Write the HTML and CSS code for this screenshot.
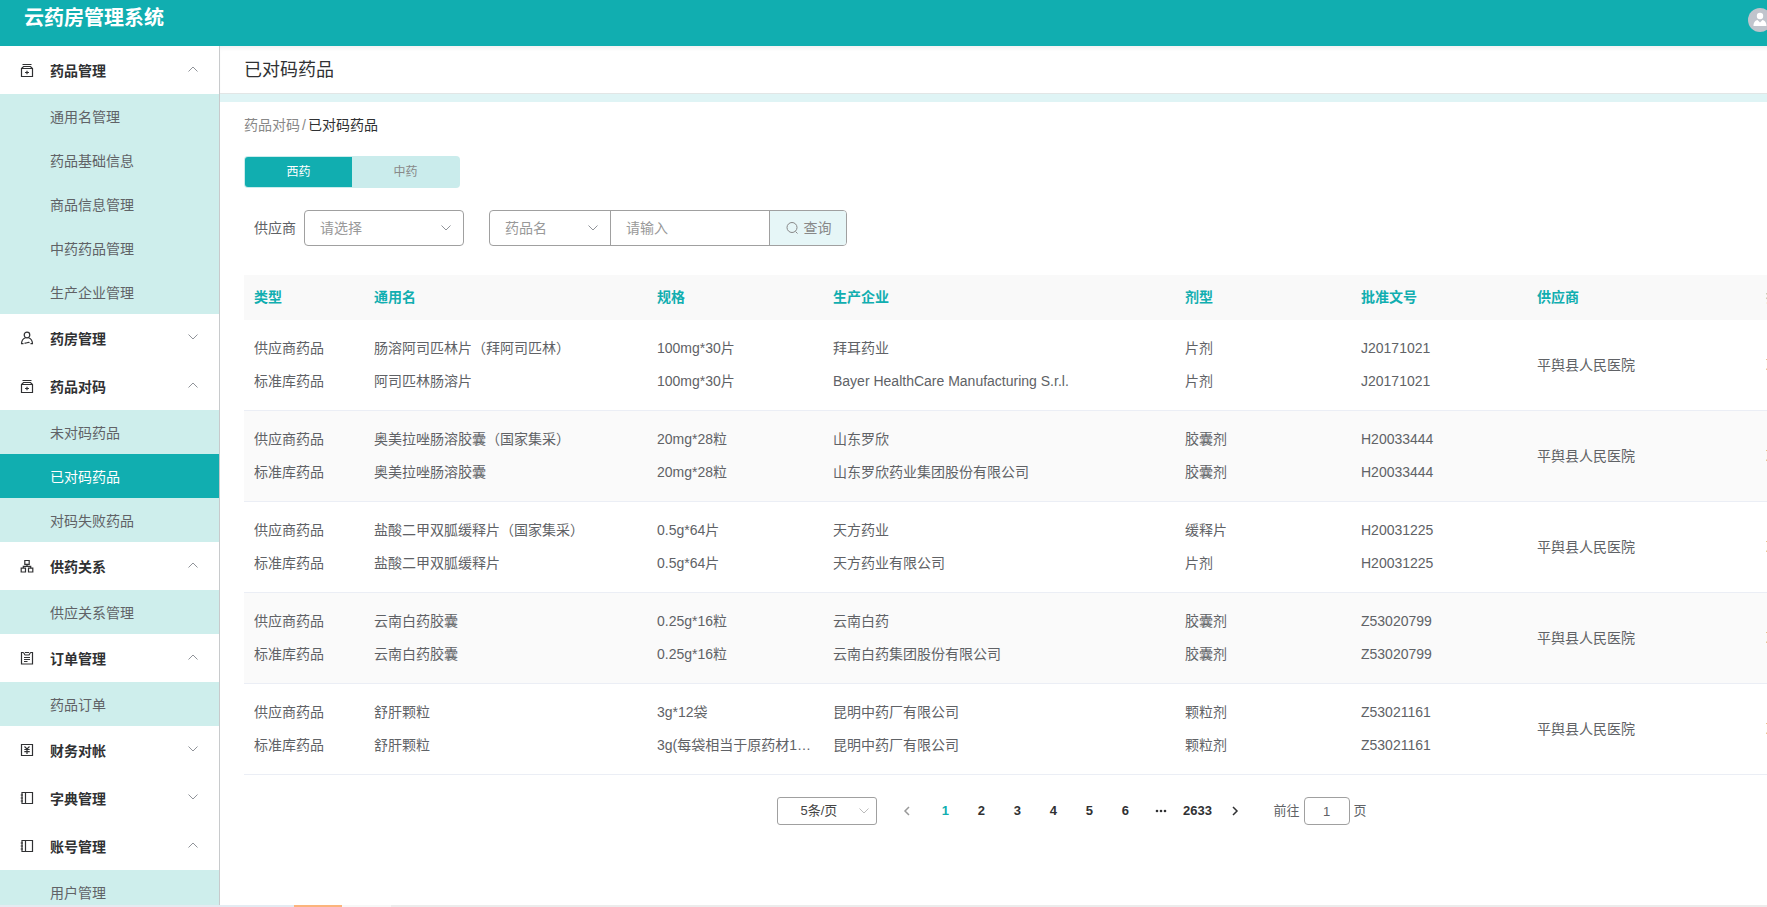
FILE: index.html
```
<!DOCTYPE html>
<html lang="zh-CN">
<head>
<meta charset="utf-8">
<title>云药房管理系统</title>
<link rel="stylesheet" href="styles.css">
</head>
<body>
<svg class="defs" aria-hidden="true">
  <symbol id="i-up" viewBox="0 0 12 12"><path d="M1.500 8.500 6 4l4.500 4.500"/></symbol>
  <symbol id="i-down" viewBox="0 0 12 12"><path d="M1.500 3.500 6 8l4.500-4.500"/></symbol>
  <symbol id="i-jar" viewBox="0 0 14 14"><path d="M2.500 1.500h9M3.500 3.500h7l2 2v8h-11v-8zM1.500 5.500h11M5 9.500h4M7 7.700v3.600"/></symbol>
  <symbol id="i-user" viewBox="0 0 14 14"><circle cx="7" cy="4" r="2.800"/><path d="M1.500 13c0-3.500 2-5.500 4-6.200M12.500 13c0-3.500-2-5.500-4-6.200M1 12.600h2.500M4.500 12c2 .8 3-1.200 5-.4M10.500 12.600H13"/></symbol>
  <symbol id="i-tree" viewBox="0 0 14 14"><path d="M4.800 1.500h4.400v3.800H4.800zM1.200 9.200h4.300v3.800H1.200zM8.500 9.200h4.300v3.800H8.500zM7 5.300v2M3.300 9.200V7.300h7.400v1.900"/></symbol>
  <symbol id="i-order" viewBox="0 0 14 14"><path d="M3.500 1.500h-2v11.500h11V1.500h-2M3.500 1.500 5 4h4l1.500-2.500M5 1.500h4M4 6.500h6M4 8.500h6M4 10.500h3.500"/></symbol>
  <symbol id="i-yen" viewBox="0 0 14 14"><path d="M1.500 1.500h11v11h-11zM4.500 3.500 7 6l2.500-2.500M4.300 6.500h5.400M4.300 8.700h5.400M7 6v5"/></symbol>
  <symbol id="i-book" viewBox="0 0 14 14"><path d="M2 1.500h10.500v11H2zM5.500 1.500v11M.7 4h2.300M.7 7h2.300M.7 10h2.300"/></symbol>
</svg>
<div class="app">
  <header class="topbar">
    <h1 class="brand">云药房管理系统</h1>
    <svg class="avatar" viewBox="0 0 24 24" role="img" aria-label="用户"><circle cx="12" cy="12" r="12" fill="#c0c4cc"/><circle cx="12" cy="8" r="3.200" fill="#fff"/><path d="M5.500 18c0-4 2-5.500 4-6l2.500 2.500L14.500 12c2 .5 4 2 4 6z" fill="#fff"/></svg>
  </header>
  <div class="body">
    <nav class="sidebar">
      <button class="group"><svg class="gicon"><use href="#i-jar"/></svg><span>药品管理</span><svg class="arrow"><use href="#i-up"/></svg></button>
      <a class="item" href="#">通用名管理</a>
      <a class="item" href="#">药品基础信息</a>
      <a class="item" href="#">商品信息管理</a>
      <a class="item" href="#">中药药品管理</a>
      <a class="item" href="#">生产企业管理</a>
      <button class="group"><svg class="gicon"><use href="#i-user"/></svg><span>药房管理</span><svg class="arrow"><use href="#i-down"/></svg></button>
      <button class="group"><svg class="gicon"><use href="#i-jar"/></svg><span>药品对码</span><svg class="arrow"><use href="#i-up"/></svg></button>
      <a class="item" href="#">未对码药品</a>
      <a class="item active" href="#">已对码药品</a>
      <a class="item" href="#">对码失败药品</a>
      <button class="group"><svg class="gicon"><use href="#i-tree"/></svg><span>供药关系</span><svg class="arrow"><use href="#i-up"/></svg></button>
      <a class="item" href="#">供应关系管理</a>
      <button class="group"><svg class="gicon"><use href="#i-order"/></svg><span>订单管理</span><svg class="arrow"><use href="#i-up"/></svg></button>
      <a class="item" href="#">药品订单</a>
      <button class="group"><svg class="gicon"><use href="#i-yen"/></svg><span>财务对帐</span><svg class="arrow"><use href="#i-down"/></svg></button>
      <button class="group"><svg class="gicon"><use href="#i-book"/></svg><span>字典管理</span><svg class="arrow"><use href="#i-down"/></svg></button>
      <button class="group"><svg class="gicon"><use href="#i-book"/></svg><span>账号管理</span><svg class="arrow"><use href="#i-up"/></svg></button>
      <a class="item" href="#">用户管理</a>
    </nav>
    <main class="main">
      <h2 class="title">已对码药品</h2>
      <div class="content">
        <div class="crumb"><a href="#">药品对码</a><span class="slash">/</span><span class="here">已对码药品</span></div>
        <div class="tabs"><button class="tab on">西药</button><button class="tab">中药</button></div>
        <form class="filters">
          <label class="label" for="supplier">供应商</label>
          <div class="pick supplier"><select id="supplier"><option>请选择</option></select><svg class="arrow"><use href="#i-down"/></svg></div>
          <div class="search">
            <div class="pick field"><select aria-label="查询字段"><option>药品名</option></select><svg class="arrow"><use href="#i-down"/></svg></div>
            <input class="word" type="text" placeholder="请输入" aria-label="关键字">
            <button class="query" type="button"><svg class="lens" viewBox="0 0 14 14"><circle cx="7" cy="6.500" r="5"/><path d="m10.500 10.500 2 2"/></svg>查询</button>
          </div>
        </form>
        <table class="grid">
          <colgroup><col class="c-type"><col class="c-name"><col class="c-std"><col class="c-maker"><col class="c-std"><col class="c-std"><col class="c-supplier"><col></colgroup>
          <thead><tr><th>类型</th><th>通用名</th><th>规格</th><th>生产企业</th><th>剂型</th><th>批准文号</th><th>供应商</th><th>操作</th></tr></thead>
          <tbody>
            <tr><td><p>供应商药品</p><p>标准库药品</p></td><td><p>肠溶阿司匹林片（拜阿司匹林）</p><p>阿司匹林肠溶片</p></td><td><p>100mg*30片</p><p>100mg*30片</p></td><td><p>拜耳药业</p><p>Bayer HealthCare Manufacturing S.r.l.</p></td><td><p>片剂</p><p>片剂</p></td><td><p>J20171021</p><p>J20171021</p></td><td>平舆县人民医院</td><td>取消对码</td></tr>
            <tr><td><p>供应商药品</p><p>标准库药品</p></td><td><p>奥美拉唑肠溶胶囊（国家集采）</p><p>奥美拉唑肠溶胶囊</p></td><td><p>20mg*28粒</p><p>20mg*28粒</p></td><td><p>山东罗欣</p><p>山东罗欣药业集团股份有限公司</p></td><td><p>胶囊剂</p><p>胶囊剂</p></td><td><p>H20033444</p><p>H20033444</p></td><td>平舆县人民医院</td><td>取消对码</td></tr>
            <tr><td><p>供应商药品</p><p>标准库药品</p></td><td><p>盐酸二甲双胍缓释片（国家集采）</p><p>盐酸二甲双胍缓释片</p></td><td><p>0.5g*64片</p><p>0.5g*64片</p></td><td><p>天方药业</p><p>天方药业有限公司</p></td><td><p>缓释片</p><p>片剂</p></td><td><p>H20031225</p><p>H20031225</p></td><td>平舆县人民医院</td><td>取消对码</td></tr>
            <tr><td><p>供应商药品</p><p>标准库药品</p></td><td><p>云南白药胶囊</p><p>云南白药胶囊</p></td><td><p>0.25g*16粒</p><p>0.25g*16粒</p></td><td><p>云南白药</p><p>云南白药集团股份有限公司</p></td><td><p>胶囊剂</p><p>胶囊剂</p></td><td><p>Z53020799</p><p>Z53020799</p></td><td>平舆县人民医院</td><td>取消对码</td></tr>
            <tr><td><p>供应商药品</p><p>标准库药品</p></td><td><p>舒肝颗粒</p><p>舒肝颗粒</p></td><td><p>3g*12袋</p><p>3g(每袋相当于原药材12g)</p></td><td><p>昆明中药厂有限公司</p><p>昆明中药厂有限公司</p></td><td><p>颗粒剂</p><p>颗粒剂</p></td><td><p>Z53021161</p><p>Z53021161</p></td><td>平舆县人民医院</td><td>取消对码</td></tr>
          </tbody>
        </table>
        <div class="pager">
          <div class="pick size"><select aria-label="每页条数"><option>5条/页</option></select><svg class="arrow"><use href="#i-down"/></svg></div>
          <button class="step prev" aria-label="上一页"><svg viewBox="0 0 12 12"><path d="M8 2 4 6l4 4"/></svg></button>
          <button class="num on">1</button><button class="num">2</button><button class="num">3</button><button class="num">4</button><button class="num">5</button><button class="num">6</button>
          <button class="num" aria-label="更多页"><svg class="dots" viewBox="0 0 12 12"><circle cx="2" cy="6" r="1.300"/><circle cx="6" cy="6" r="1.300"/><circle cx="10" cy="6" r="1.300"/></svg></button>
          <button class="num">2633</button>
          <button class="step next" aria-label="下一页"><svg viewBox="0 0 12 12"><path d="m4 2 4 4-4 4"/></svg></button>
          <label class="jump">前往<input type="text" value="1">页</label>
        </div>
      </div>
    </main>
  </div>
  <div class="strip"><i class="s-blue"></i><i class="s-orange"></i><i class="s-light"></i><i class="s-grey"></i></div>
</div>
</body>
</html>
```

FILE: styles.css
```
* { box-sizing: border-box; }
body {
  margin: 0;
  overflow: hidden;
  background: #fff;
  color: #606266;
  font: 14px/20px "Liberation Sans", "Noto Sans CJK SC", sans-serif;
}
button, input, select { font: inherit; color: inherit; margin: 0; padding: 0; border: 0; background: none; outline: 0; }
a { color: inherit; text-decoration: none; }
p { margin: 0; }
.defs { display: none; }

.app { display: flex; flex-direction: column; height: 100vh; min-width: 1920px; }

.topbar {
  flex: none;
  display: flex;
  justify-content: space-between;
  align-items: flex-start;
  height: 46px;
  padding: 4px 148px 0 24px;
  background: #11aeb0;
}
.brand { margin: 0; font-size: 20px; line-height: 28px; color: #fff; }
.avatar { width: 24px; height: 24px; margin-top: 4px; }

.body { flex: 1; display: flex; min-height: 0; }

.sidebar { flex: none; width: 220px; overflow: hidden; border-right: 1px solid #c8cacc; }
.group {
  display: flex;
  align-items: center;
  width: 100%;
  height: 48px;
  padding: 0 20px;
  text-align: left;
  font-weight: bold;
  color: #303133;
}
.group span { flex: 1; padding: 2px 0 0 16px; }
.gicon { width: 14px; height: 14px; fill: none; stroke: #303133; stroke-width: 1.2; }
.arrow { width: 12px; height: 12px; fill: none; stroke: #909399; stroke-width: 1; }
.group .arrow { margin-bottom: 2px; }
.item { display: block; height: 44px; padding-left: 50px; line-height: 46px; background: #ceeeec; }
.item.active { background: #11aeb0; color: #fff; }

.main { flex: 1; min-width: 0; overflow: hidden; }
.title {
  height: 56px;
  margin: 0;
  padding-left: 24px;
  border-bottom: 8px solid #dff4f5;
  box-shadow: inset 0 -1px #e2e6e6, inset 0 4px 4px -2px #f0f0f0;
  font-size: 18px;
  font-weight: normal;
  line-height: 48px;
  color: #303133;
}
.content { padding: 13px 20px 0 24px; }
.crumb { color: #888; }
.slash { padding: 0 2px; }
.here { color: #303133; }

.tabs { display: flex; width: 216px; height: 32px; margin-top: 21px; padding: 1px; border-radius: 4px; background: #caecec; }
.tab { flex: 1; border-radius: 3px; font-size: 12px; color: #888; }
.tab.on { border-radius: 3px 0 0 3px; background: #11aeb0; color: #fff; }

.filters { display: flex; align-items: center; margin-top: 22px; padding-left: 10px; }
.label { width: 50px; }
.pick { position: relative; }
.pick select { width: 100%; height: 100%; appearance: none; color: #999; }
.pick .arrow { position: absolute; top: 50%; right: 11px; margin-top: -6px; pointer-events: none; }
.supplier { width: 160px; height: 36px; border: 1px solid #a0a0a0; border-radius: 4px; }
.supplier select, .field select { padding-left: 15px; }
.search { display: flex; height: 36px; margin-left: 25px; border: 1px solid #a0a0a0; border-radius: 4px; overflow: hidden; }
.field { width: 121px; border-right: 1px solid #a0a0a0; }
.word { width: 159px; padding-left: 15px; border-right: 1px solid #a0a0a0; }
.word::placeholder { color: #999; opacity: 1; }
.query { display: flex; align-items: center; justify-content: center; gap: 5px; width: 76px; background: #e6f6f7; color: #888; }
.lens { width: 14px; height: 14px; fill: none; stroke: #888; stroke-width: 1; }

.grid { width: 100%; margin-top: 29px; table-layout: fixed; border-collapse: separate; border-spacing: 0; }
.c-type { width: 120px; }
.c-name { width: 283px; }
.c-std { width: 176px; }
.c-maker { width: 352px; }
.c-supplier { width: 229px; }
.grid th { height: 45px; padding: 0 10px 2px; background: #f9f9f9; text-align: left; color: #11aeb0; }
.grid td { padding: 12px 10px; border-bottom: 1px solid #ebeef5; }
.grid p { line-height: 33px; white-space: nowrap; overflow: hidden; text-overflow: ellipsis; }
.grid tbody tr:nth-child(even) { background: #fafafa; }

.pager { display: flex; justify-content: center; align-items: center; height: 28px; margin-top: 22px; font-size: 13px; }
.size { width: 100px; height: 28px; border: 1px solid #a0a0a0; border-radius: 3px; }
.size select { padding-left: 22px; color: #444; }
.size .arrow { right: 6px; stroke: #bbb; }
.step { display: flex; align-items: center; justify-content: center; width: 36px; height: 28px; }
.step svg { width: 12px; height: 12px; fill: none; stroke: #303133; stroke-width: 1.5; }
.prev { margin: 0 2px 0 12px; }
.prev svg { stroke: #999; }
.num { display: flex; align-items: center; justify-content: center; width: 36px; height: 28px; font-weight: bold; color: #303133; }
.num.on { color: #11aeb0; }
.dots { width: 12px; height: 12px; fill: #303133; }
.next { margin-left: 2px; }
.jump { display: flex; align-items: center; gap: 4px; margin-left: 20px; }
.jump input { width: 46px; height: 28px; border: 1px solid #a0a0a0; border-radius: 4px; text-align: center; }

.strip { flex: none; display: flex; height: 2px; }
.s-blue { width: 294px; background: #e4ebf2; }
.s-orange { width: 48px; background: #fbb47c; }
.s-light { width: 49px; background: #f7f7f7; }
.s-grey { flex: 1; background: #ececec; }
```
